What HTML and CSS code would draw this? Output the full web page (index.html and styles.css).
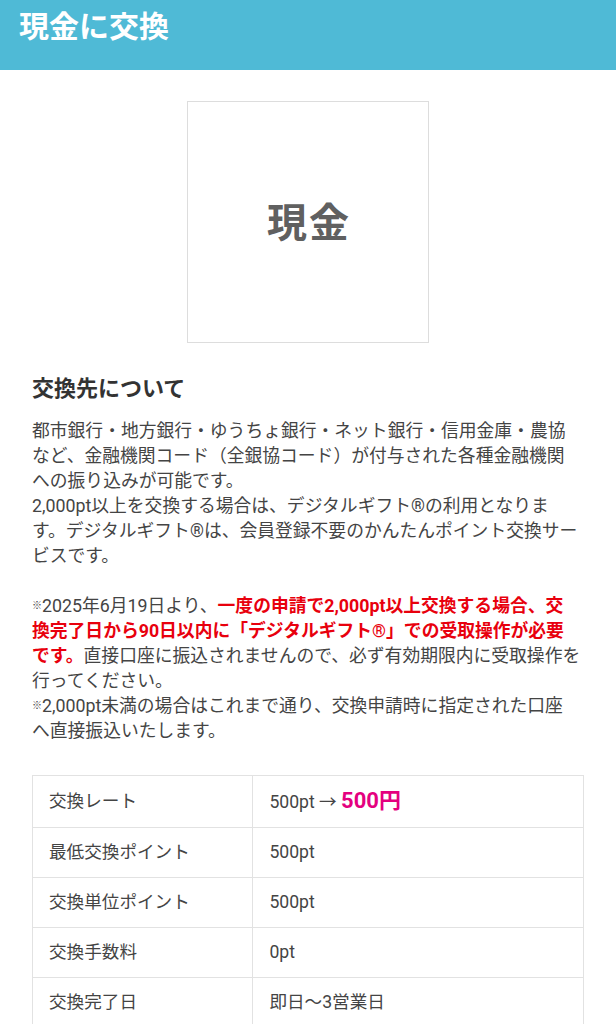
FILE: index.html
```html
<!DOCTYPE html>
<html lang="ja">
<head>
<meta charset="utf-8">
<title>現金に交換</title>
<link rel="stylesheet" href="styles.css">
</head>
<body>
<header class="page-header">
  <h1 class="page-title">現金に交換</h1>
</header>
<main class="content">
  <div class="thumb"><span class="thumb-label">現金</span></div>
  <section class="about">
    <h2 class="about-title">交換先について</h2>
    <p class="about-text">都市銀行・地方銀行・ゆうちょ銀行・ネット銀行・信用金庫・農協<br>など、金融機関コード（全銀協コード）が付与された各種金融機関<br>への振り込みが可能です。<br>2,000pt以上を交換する場合は、デジタルギフト®の利用となりま<br>す。デジタルギフト®は、会員登録不要のかんたんポイント交換サー<br>ビスです。<br><br><span class="kome">※</span>2025年6月19日より、<strong class="alert">一度の申請で2,000pt以上交換する場合、交<br>換完了日から90日以内に「デジタルギフト®」での受取操作が必要<br>です。</strong>直接口座に振込されませんので、必ず有効期限内に受取操作を<br>行ってください。<br><span class="kome">※</span>2,000pt未満の場合はこれまで通り、交換申請時に指定された口座<br>へ直接振込いたします。</p>
  </section>
  <table class="spec">
    <tr><th>交換レート</th><td>500pt → <span class="rate">500円</span></td></tr>
    <tr><th>最低交換ポイント</th><td>500pt</td></tr>
    <tr><th>交換単位ポイント</th><td>500pt</td></tr>
    <tr><th>交換手数料</th><td>0pt</td></tr>
    <tr><th>交換完了日</th><td>即日～3営業日</td></tr>
  </table>
</main>
</body>
</html>
```

FILE: styles.css
```css
html, body {
  margin: 0;
  padding: 0;
  background: #ffffff;
}
body {
  font-family: Roboto, "Noto Sans CJK JP", sans-serif;
  color: #444444;
}
.page-header {
  background: #4fbad6;
  height: 70px;
  box-sizing: border-box;
  padding: 4px 19px 0;
}
.page-title {
  margin: 0;
  color: #ffffff;
  font-size: 30px;
  font-weight: 700;
  line-height: 45px;
}
.content {
  padding: 31px 32px 40px;
}
.thumb {
  width: 240px;
  height: 240px;
  margin: 0 auto;
  border: 1px solid #dddddd;
  display: flex;
  align-items: center;
  justify-content: center;
}
.thumb-label {
  font-size: 40px;
  font-weight: 700;
  color: #606060;
  letter-spacing: 2px;
  padding: 0 0 5px 2px;
}
.about {
  margin-top: 30px;
}
.about-title {
  margin: 0;
  font-size: 22px;
  line-height: 31px;
  font-weight: 700;
  color: #333333;
}
.about-text {
  margin: 14px 0 0;
  font-size: 17.8px;
  line-height: 25px;
  white-space: nowrap;
}
.kome {
  font-size: 10px;
  vertical-align: 3px;
  line-height: 1;
}
.alert {
  color: #e8000d;
  font-weight: 700;
}
.spec {
  margin-top: 32px;
  width: 100%;
  border-collapse: collapse;
  font-size: 17.6px;
  line-height: 25px;
}
.spec th, .spec td {
  border: 1px solid #e2e2e2;
  padding: 12px 16px;
  text-align: left;
  font-weight: 400;
  vertical-align: middle;
}
.spec th {
  width: 40%;
}
.rate {
  color: #e4007f;
  font-size: 22px;
  font-weight: 700;
}
```
